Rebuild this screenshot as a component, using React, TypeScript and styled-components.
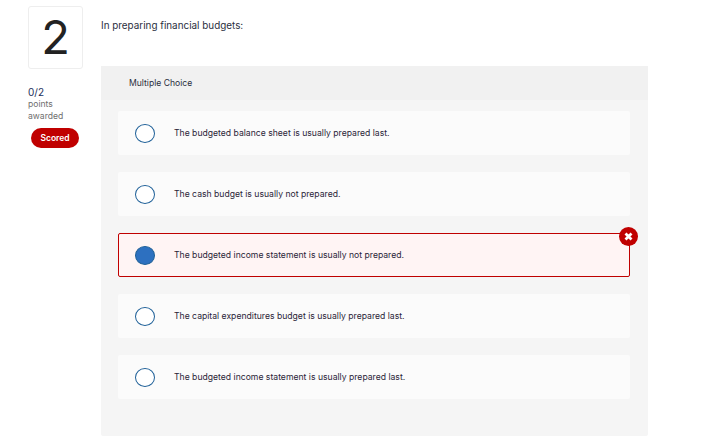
import React from "react";
import styled, { createGlobalStyle } from "styled-components";

const Global = createGlobalStyle`
  html, body { margin: 0; padding: 0; background: #fff; }
  body { font-family: "Inter", "Liberation Sans", sans-serif; width: 718px; height: 442px; overflow: hidden; }
`;
const Page = styled.div`
  display: flex;
  padding: 6px 0 0 28px;
  width: 718px;
  height: 442px;
  box-sizing: border-box;
`;
const Side = styled.aside`
  width: 55px;
  margin-right: 18px;
  flex: none;
`;
const NumberBox = styled.div`
  width: 55px;
  height: 63px;
  box-sizing: border-box;
  border: 1px solid #eeeeee;
  border-radius: 3px;
  padding-bottom: 3px;
  display: flex;
  align-items: center;
  justify-content: center;
  font-size: 47px;
  color: #222;
  font-weight: 400;
`;
const Points = styled.div`
  margin-top: 17px;
  font-size: 8.6px;
  line-height: 12px;
  color: #6f6f6f;
`;
const Score = styled.div`
  font-size: 10px;
  line-height: 12px;
  color: #1c2f5c;
`;
const Badge = styled.div`
  margin: 6px 0 0 3px;
  width: 48px;
  height: 20px;
  border-radius: 10px;
  background: #c00000;
  color: #fff;
  font-size: 8.5px;
  font-weight: 600;
  display: flex;
  align-items: center;
  justify-content: center;
`;
const Main = styled.main`
  width: 547px;
  flex: none;
`;
const Question = styled.p`
  margin: 0;
  height: 60px;
  padding-top: 12px;
  box-sizing: border-box;
  font-size: 9.9px;
  line-height: 14px;
  color: #2a2f3d;
`;
const Panel = styled.section`
  background: #f5f5f5;
  border-radius: 2px;
  height: 370px;
`;
const PanelHeader = styled.div`
  height: 34px;
  background: #f1f1f1;
  padding-left: 28px;
  padding-bottom: 1px;
  box-sizing: border-box;
  display: flex;
  align-items: center;
  font-size: 8.6px;
  color: #2a2f3d;
`;
const Options = styled.div`
  display: flex;
  flex-direction: column;
  gap: 17px;
  padding: 11px 18px 0 17px;
`;
const Option = styled.div<{ $wrong?: boolean }>`
  position: relative;
  height: 44px;
  box-sizing: border-box;
  display: flex;
  align-items: center;
  padding-left: ${(p) => (p.$wrong ? 16 : 17)}px;
  border-radius: 2px;
  background: ${(p) => (p.$wrong ? "#fff4f4" : "#fbfbfb")};
  border: ${(p) => (p.$wrong ? "1px solid #c00000" : "none")};
`;
const Radio = styled.span<{ $checked?: boolean }>`
  width: 20px;
  height: 19px;
  box-sizing: border-box;
  border-radius: 50%;
  flex: none;
  border: 1.5px solid #1f6098;
  background: ${(p) => (p.$checked ? "#2d70c0" : "#fff")};
  margin-right: 19px;
`;
const OptionText = styled.span`
  font-size: 8.65px;
  line-height: 12px;
  margin-top: -1px;
  color: #2a2438;
`;
const WrongMark = styled.svg`
  position: absolute;
  top: -7px;
  right: -9px;
  width: 19px;
  height: 19px;
`;

const options = [
  "The budgeted balance sheet is usually prepared last.",
  "The cash budget is usually not prepared.",
  "The budgeted income statement is usually not prepared.",
  "The capital expenditures budget is usually prepared last.",
  "The budgeted income statement is usually prepared last.",
];

export default function App() {
  return (
    <Page>
      <Global />
      <Side>
        <NumberBox>2</NumberBox>
        <Points>
          <Score>0/2</Score>
          points
          <br />
          awarded
        </Points>
        <Badge>Scored</Badge>
      </Side>
      <Main>
        <Question>In preparing financial budgets:</Question>
        <Panel>
          <PanelHeader>Multiple Choice</PanelHeader>
          <Options>
            {options.map((text, i) => (
              <Option key={text} $wrong={i === 2}>
                <Radio $checked={i === 2} />
                <OptionText>{text}</OptionText>
                {i === 2 && (
                  <WrongMark viewBox="0 0 19 19">
                    <circle cx="9.5" cy="9.5" r="9.5" fill="#c00000" />
                    <path d="M6.5 6.5l6 6M12.5 6.5l-6 6" stroke="#fff" strokeWidth="2.8" />
                  </WrongMark>
                )}
              </Option>
            ))}
          </Options>
        </Panel>
      </Main>
    </Page>
  );
}
